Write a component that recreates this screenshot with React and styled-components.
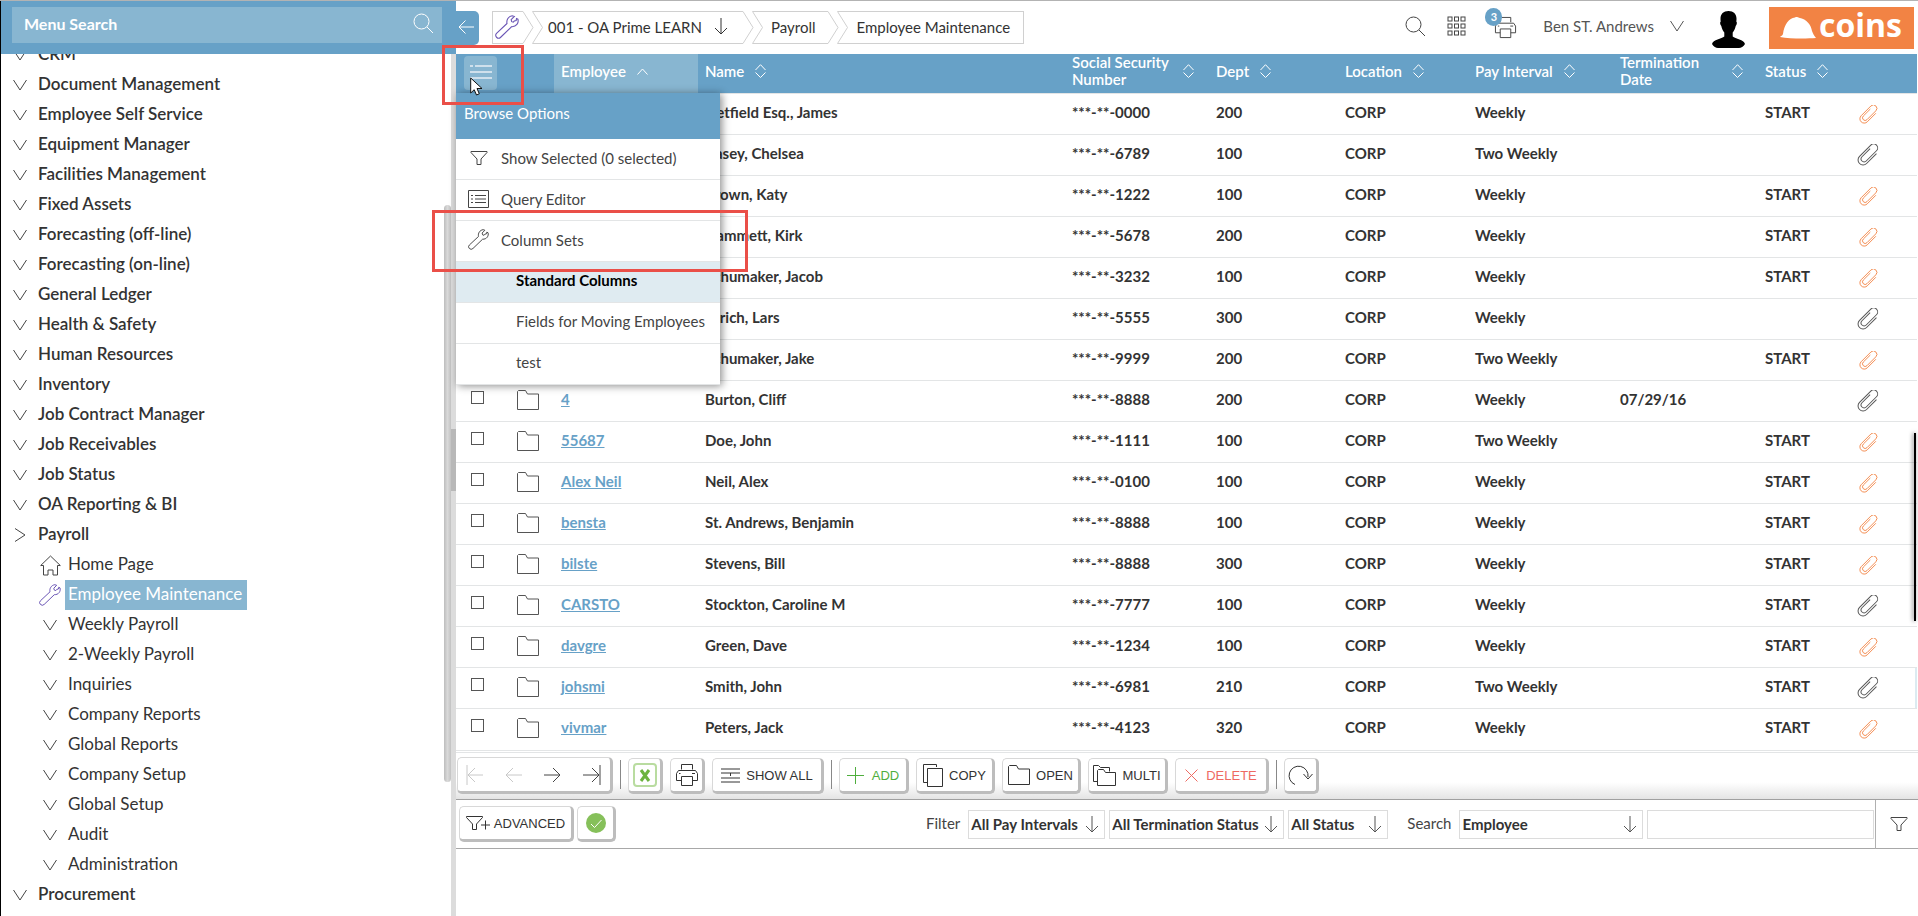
import React from 'react';
import styled, { createGlobalStyle, css } from 'styled-components';

const c = {
  blue: '#67a1c7',
  blueLight: '#88b6d1',
  ink: '#333333',
  line: '#e3e5e6',
  grey: '#d0d0d0',
  orange: '#f28344',
  purple: '#6a55b5',
};

const GlobalStyle = createGlobalStyle`
  *, *::before, *::after { box-sizing: border-box; }
  html, body { margin: 0; padding: 0; background: #fff; }
  body {
    font-family: Lato, "Open Sans", sans-serif;
    font-size: 15px;
    color: ${c.ink};
    overflow: hidden;
  }
  button, input, select { font-family: inherit; color: inherit; margin: 0; }
  ul, ol { list-style: none; margin: 0; padding: 0; }
`;

/* ---------- icons ---------- */

const Svg = styled.svg`
  display: block;
  flex: none;
  fill: none;
  stroke: currentColor;
  stroke-width: ${(p) => p.$w || 1};
`;

const Icon = ({ w, h, box, sw, children }) => (
  <Svg width={w} height={h || w} viewBox={box || `0 0 ${w} ${h || w}`} $w={sw} aria-hidden="true">
    {children}
  </Svg>
);

const Chevron = () => <Icon w={14} h={12}><path d="M.5 1 7 11 13.500 1" /></Icon>;
const ChevronRight = () => <Icon w={14} h={14}><path d="M2 .5 12 7 2 13.500" /></Icon>;
const SearchIcon = () => <Icon w={21}><circle cx="8.500" cy="8.500" r="7.500" /><path d="m14 14 6 6" /></Icon>;
const Wrench = ({ size = 22 }) => (
  <Icon w={size} box="0 0 22 22">
    <path d="M1.400 20.400a2.500 2.500 0 0 1 0-3.600l9.600-9C10.300 4.500 12.200 1.300 15.800.7l1.900.6-2.900 2.900.5 1.900 1.500.5.900-1.200 1.700-.4.300-1.700 1.300.6c1 3.400-1.500 7-5.700 6.800L5.200 20.400a2.700 2.700 0 0 1-3.800 0z" />
  </Icon>
);
const DownArrow = () => <Icon w={14} h={17}><path d="M7 0v16M1 10l6 6 6-6" /></Icon>;
const LeftArrow = () => <Icon w={16}><path d="M1 8h15M7.500 1.500 1 8l6.500 6.500" /></Icon>;
const Folder = () => <Icon w={22} h={20}><path d="M.5 19.500V1.500l1-1h7L10.500 4h11v15.500z" /></Icon>;
const Clip = ({ size = 22 }) => (
  <Icon w={size} box="0 0 22 22">
    <g transform="rotate(45 11 11)">
      <path d="M16 4v14a5 5 0 0 1-10 0V2a4 4 0 0 1 8 0V16.500a3 3 0 0 1-6 0V5" />
    </g>
  </Icon>
);
const Printer = ({ w = 24 }) => (
  <Icon w={w} h={w} box="0 0 24 24">
    <path d="M6.500 6.500v-5h11v5M6.500 17.500h-5v-7l2-3h17l2 3v7h-5" />
    <path d="M6.500 13.500h11v9h-11zM4 10.500h1.500M17 10.500h3" />
  </Icon>
);
const Grid = () => (
  <Icon w={19} h={20}>
    {[1, 8, 15].map((y) => [1, 7.5, 14].map((x) => (
      <rect key={`${x}-${y}`} x={x} y={y} width="4" height="4" />
    )))}
  </Icon>
);
const ListIcon = () => (
  <Icon w={22} h={16} sw={2}><path d="M0 2h3M5 2h17M0 8h22M0 14h22" /></Icon>
);
const Query = () => (
  <Icon w={21} h={18}>
    <path d="M.5.500h20v17H.5zM3 5.500h2M7 5.500h11M3 9h2M7 9h11M3 12.500h2M7 12.500h11" />
  </Icon>
);
const Funnel = () => <Icon w={18} h={14}><path d="M1 .5h16v1L11 8v5.500H7V8L1 1.500z" /></Icon>;
const FunnelPlus = () => (
  <Icon w={24} h={14}><path d="M.5.500h16v1L10.500 8v5.500h-4V8l-6-6.500zM15 9h9M19.500 4.500v9" /></Icon>
);
const Home = () => (
  <Icon w={21} h={21}>
    <path d="M3.500 10.500H.7L10.500 1l9.800 9.500h-2.800v9.500h-4.500v-5h-5v5H3.500z" />
  </Icon>
);
const SortBoth = () => <Icon w={11} h={14}><path d="M.5 6 5.500.7l5 5.300M.5 8.500l5 5 5-5" /></Icon>;
const SortUp = () => <Icon w={11} h={7}><path d="M.5 6.500 5.500 1l5 5.500" /></Icon>;
const Helmet = () => (
  <Svg width="36" height="22" viewBox="0 0 36 22" aria-hidden="true">
    <path fill="#fff" stroke="none" d="M0 20c1-1 2.500-1.500 3-3C4 8 9 1 15 .5c1-.6 3-.6 4 .2C27 2 31 8 32 14c1 3 2.500 5 4 7-10 .8-26 .8-36-1z" />
  </Svg>
);
const Person = () => (
  <Svg width="33" height="37" viewBox="0 0 33 37" aria-hidden="true">
    <path fill="#000" stroke="none" d="M16.500 0c5 0 8 3 8 7.500 0 1 0 2-.2 3 .9.400.8 3-.6 4.500-.6 3-1.700 5-3 6.500v4c2.500 2.500 11.300 3 12.300 7.500-1.500 2.500-4 4-6 4H6c-2 0-4.500-1.500-6-4 1-4.500 9.800-5 12.300-7.500v-4c-1.300-1.500-2.400-3.500-3-6.500-1.400-1.500-1.500-4.100-.6-4.500-.2-1-.2-2-.2-3 0-4.500 3-7.500 8-7.500z" />
  </Svg>
);
const Pointer = () => (
  <Svg width="13" height="20" viewBox="0 0 13 20" aria-hidden="true">
    <path fill="#fff" stroke="#111" d="M.7 1v15l3.500-3.300L6.500 18l2.800-1.200L7 11.500h5z" />
  </Svg>
);

/* ---------- shell ---------- */

const Shell = styled.div`
  display: grid;
  grid-template-columns: 456px minmax(0, 1fr);
  height: 100vh;
  border-top: 1px solid #b3b3b3;
  overflow: hidden;
`;

const Sidebar = styled.aside`
  display: flex;
  flex-direction: column;
  min-height: 0;
  border-left: 1px solid #000;
`;

const SearchBar = styled.div`
  flex: none;
  height: 53px;
  padding: 6px 14px 0 11px;
  background: ${c.blue};
`;

const SearchField = styled.label`
  display: flex;
  align-items: center;
  height: 36px;
  padding: 0 8px 3px 12px;
  background: ${c.blueLight};
  color: #fff;
`;

const SearchInput = styled.input`
  flex: 1;
  min-width: 0;
  border: 0;
  padding: 0;
  outline: 0;
  background: transparent;
  font-size: 16px;
  font-weight: 700;
  &::placeholder { color: #fff; opacity: 1; }
`;

const SidebarBody = styled.div`
  display: flex;
  flex: 1;
  min-height: 0;
`;

const MenuClip = styled.nav`
  flex: 1;
  overflow: hidden;
`;

const Menu = styled.ul`
  margin-top: -14px;
`;

const MenuItem = styled.li`
  display: flex;
  align-items: center;
  height: 30px;
  padding-left: ${(p) => (p.$sub ? 37 : 12)}px;
`;

const MenuIcon = styled.span`
  display: flex;
  justify-content: center;
  width: ${(p) => (p.$sub ? 24 : 14)}px;
  color: ${(p) => (p.$purple ? c.purple : '#444')};
`;

const MenuLink = styled.a`
  display: block;
  height: 30px;
  margin-left: ${(p) => (p.$sub ? 3 : 8)}px;
  padding: 0 5px 0 3px;
  line-height: 28px;
  font-size: 17px;
  font-weight: ${(p) => (p.$sub ? 400 : 600)};
  color: ${c.ink};
  text-decoration: none;
  white-space: nowrap;
  ${(p) => p.$active && css`
    background: ${c.blueLight};
    color: #fff;
  `}
`;

const ScrollTrack = styled.div`
  width: 7px;
  padding-top: 151px;
`;

const ScrollThumb = styled.div`
  height: 577px;
  border-radius: 4px;
  background: linear-gradient(90deg, #bdbdbd, #d9d9d9 50%, #c2c2c2);
`;

const Splitter = styled.div`
  width: 5px;
  padding-top: 375px;
  background: #dcdcdc;
`;

const SplitterGrip = styled.div`
  height: 62px;
  background: #b8b8b8;
`;

/* ---------- top bar ---------- */

const Main = styled.main`
  display: flex;
  flex-direction: column;
  min-width: 0;
  position: relative;
`;

const TopBar = styled.header`
  display: flex;
  align-items: flex-start;
  height: 53px;
  padding: 10px 4px 0 0;
`;

const CollapseButton = styled.button`
  display: grid;
  place-items: center;
  width: 23px;
  height: 34px;
  margin-right: 13px;
  padding: 0 4px 2px 0;
  border: 0;
  border-radius: 0 5px 5px 0;
  background: ${c.blue};
  color: #fff;
`;

const Crumbs = styled.ol`
  display: flex;
  height: 33px;
  border-left: 1px solid ${c.grey};
  border-right: 1px solid ${c.grey};
`;

const Crumb = styled.li`
  display: flex;
  align-items: center;
  gap: 12px;
  border-top: 1px solid ${c.grey};
  border-bottom: 1px solid ${c.grey};
  padding: 0 ${(p) => p.$right}px 2px ${(p) => p.$left}px;
  font-size: 15px;
  white-space: nowrap;
  a { color: ${c.ink}; text-decoration: none; }
`;

const CrumbGap = styled.li`
  color: ${c.grey};
`;

const CrumbJoin = () => (
  <CrumbGap aria-hidden="true">
    <Icon w={20} h={33}><path d="M0 .5 10 16.500 0 32.500M20 .5H9.500l10 16-10 16H20" /></Icon>
  </CrumbGap>
);

const Tools = styled.div`
  display: flex;
  align-items: flex-start;
  margin-left: auto;
`;

const ToolButton = styled.button`
  position: relative;
  display: flex;
  padding: 5px 0 0;
  margin-right: ${(p) => p.$gap}px;
  border: 0;
  background: none;
  color: #444;
`;

const Badge = styled.span`
  position: absolute;
  top: -3px;
  left: -9px;
  width: 17px;
  height: 18px;
  border-radius: 9px;
  background: ${c.blue};
  color: #fff;
  font-size: 11px;
  font-weight: 700;
  line-height: 17px;
  text-align: center;
`;

const UserButton = styled.button`
  display: flex;
  align-items: center;
  gap: 16px;
  height: 31px;
  margin-right: 28px;
  padding: 0 0 1px;
  border: 0;
  background: none;
  font-size: 15px;
  color: #555;
`;

const Avatar = styled.span`
  margin-right: 24px;
`;

const Logo = styled.a`
  display: flex;
  align-items: center;
  gap: 3px;
  width: 145px;
  height: 42px;
  margin-top: -4px;
  padding-left: 11px;
  background: ${c.orange};
  color: #fff;
  font: 700 32px/36px "Open Sans", sans-serif;
  text-decoration: none;
`;

const LogoText = styled.span`
  padding-bottom: 6px;
`;

/* ---------- data table ---------- */

const Table = styled.table`
  width: 100%;
  table-layout: fixed;
  border-collapse: separate;
  border-spacing: 0;
  padding-right: 1px;
`;

const Th = styled.th`
  height: 40px;
  padding: 0 ${(p) => (p.$wrap ? 15 : 7)}px ${(p) => (p.$menu ? 1 : 5)}px ${(p) => (p.$menu ? 8 : 7)}px;
  border-bottom: 1px solid ${c.line};
  background: ${(p) => (p.$sorted ? c.blueLight : c.blue)};
  background-clip: padding-box;
  color: #fff;
  font-size: 15px;
  font-weight: 600;
  line-height: 17px;
  text-align: left;
  vertical-align: middle;
`;

const SortButton = styled.button`
  display: flex;
  align-items: center;
  gap: 11px;
  width: ${(p) => (p.$wrap ? '100%' : 'auto')};
  padding: 0;
  border: 0;
  background: none;
  font: inherit;
  color: #fff;
  text-align: left;
  span { flex: ${(p) => (p.$wrap ? 1 : 'none')}; }
`;

const OptionsButton = styled.button`
  display: flex;
  justify-content: center;
  width: 33px;
  height: 34px;
  padding: 8px 0 0;
  border: 0;
  border-radius: 4px;
  background: ${c.blueLight};
  color: #cfe0ec;
`;

const Td = styled.td`
  height: 41px;
  padding: 0 7px 4px;
  border-bottom: 1px solid ${c.line};
  font-size: 15px;
  font-weight: 700;
  white-space: nowrap;
  vertical-align: middle;
  tr:last-child > & { border-bottom-color: #fff; }
`;

const CheckCell = styled(Td)`
  padding: 10px 0 0 15px;
  vertical-align: top;
`;

const IconCell = styled(Td)`
  padding-bottom: 2px;
  color: #555;
`;

const ClipCell = styled(Td)`
  padding: 0;
  color: ${(p) => (p.$filled ? c.orange : '#555')};
  ${(p) => p.$focus && css`box-shadow: inset -2px 0 #dcebf1;`}
`;

const ClipBox = styled.span`
  display: flex;
  justify-content: center;
  width: 36px;
`;

const Check = styled.input`
  display: block;
  appearance: none;
  width: 13px;
  height: 13px;
  border: 1px solid #555;
  background: #fff;
`;

const RowLink = styled.a`
  color: ${c.blue};
`;

const ScrollHint = styled.div`
  position: absolute;
  right: 2px;
  top: 432px;
  width: 2px;
  height: 188px;
  background: #000;
  box-shadow: -1px 0 4px rgba(0, 0, 0, 0.6);
`;

/* ---------- bottom bars ---------- */

const ActionBar = styled.div`
  display: flex;
  align-items: flex-start;
  gap: 7px;
  height: 50px;
  padding: 4px 1px 0;
  border-top: 1px solid ${c.line};
  border-bottom: 1px solid #a0a0a0;
  background: linear-gradient(#fff 65%, #e4e4e4);
  box-shadow: inset 0 1px #fff, inset 0 2px ${c.line};
`;

const Button = styled.button`
  display: flex;
  align-items: center;
  justify-content: center;
  gap: ${(p) => p.$gap || 6}px;
  height: 36px;
  min-width: ${(p) => p.$min || 35}px;
  margin: ${(p) => p.$drop || 0}px ${(p) => p.$after || 0}px 0 0;
  padding: 0 2px;
  border: 1px solid #d8d8d8;
  border-right: 3px solid #bdbdbd;
  border-bottom: 3px solid #bdbdbd;
  border-radius: 5px;
  background: #fff;
  color: ${(p) => p.$color || '#333'};
  font-family: "Liberation Sans", Arial, sans-serif;
  font-size: 13px;
  white-space: nowrap;
`;

const PagerGroup = styled.div`
  display: flex;
  align-items: center;
  justify-content: space-between;
  width: 156px;
  height: 37px;
  margin-top: 2px;
  padding: 0 9px 0 8px;
  border: 1px solid #d8d8d8;
  border-right: 3px solid #bdbdbd;
  border-bottom: 3px solid #bdbdbd;
  border-radius: 5px;
  background: #fff;
`;

const PagerButton = styled.button`
  display: flex;
  padding: 0;
  border: 0;
  background: none;
  color: ${(p) => (p.disabled ? '#c8c8c8' : '#444')};
`;

const Rule = styled.span`
  width: 1px;
  height: 29px;
  margin: 5px 0 0;
  background: #888;
`;

const FilterBar = styled.form`
  display: flex;
  align-items: center;
  height: 49px;
  border-bottom: 1px solid #a8a8a8;
  padding-left: 3px;
`;

const FilterLabel = styled.label`
  margin: 0 8px 3px ${(p) => p.$left}px;
  font-size: 15px;
  color: #444;
`;

const SelectBox = styled.span`
  display: grid;
  align-items: center;
  width: ${(p) => p.$width}px;
  height: 29px;
  margin-right: 4px;
  border: 1px solid #dcdcdc;
  color: #555;
  > * { grid-area: 1 / 1; }
  > svg { justify-self: end; margin-right: 5px; pointer-events: none; }
`;

const Select = styled.select`
  appearance: none;
  width: 100%;
  height: 27px;
  padding: 0 2px;
  border: 0;
  background: #fff;
  color: ${c.ink};
  font-size: 15px;
  font-weight: 700;
`;

const SearchText = styled.input`
  flex: 1;
  min-width: 0;
  height: 29px;
  border: 1px solid #dcdcdc;
`;

const FunnelButton = styled.button`
  display: grid;
  place-items: center;
  width: 43px;
  height: 49px;
  margin-left: 1px;
  padding: 0 0 0 3px;
  border: 0;
  border-left: 1px solid #b0b0b0;
  background: none;
  color: #444;
`;

/* ---------- overlays ---------- */

const Popup = styled.div`
  position: absolute;
  top: 92px;
  left: 0;
  width: 264px;
  background: #fff;
  box-shadow: 2px 1px 8px rgba(0, 0, 0, 0.45);
  font-size: 15px;
`;

const PopupTitle = styled.div`
  height: 46px;
  padding-left: 8px;
  background: ${c.blue};
  color: #fff;
  line-height: 40px;
`;

const PopupItem = styled.button`
  display: flex;
  align-items: center;
  gap: 12px;
  width: 100%;
  height: 41px;
  padding: 0 0 ${(p) => (p.$sub ? 5 : 3)}px ${(p) => (p.$sub ? 60 : 12)}px;
  border: 0;
  border-bottom: 1px solid ${c.line};
  background: ${(p) => (p.$active ? '#dfebf1' : '#fff')};
  color: ${(p) => (p.$active ? '#000' : '#444')};
  font-size: 15px;
  font-weight: ${(p) => (p.$active ? 700 : 400)};
  white-space: nowrap;
`;

const PopupIcon = styled.span`
  display: flex;
  justify-content: center;
  width: 21px;
`;

const Highlight = styled.div`
  position: absolute;
  left: ${(p) => p.$x}px;
  top: ${(p) => p.$y}px;
  width: ${(p) => p.$w}px;
  height: ${(p) => p.$h}px;
  border: 3px solid #ea4f48;
  pointer-events: none;
`;

const Cursor = styled.span`
  position: absolute;
  left: 14px;
  top: 76px;
`;

/* ---------- data ---------- */

const menu = [
  ['CRM'], ['Document Management'], ['Employee Self Service'], ['Equipment Manager'],
  ['Facilities Management'], ['Fixed Assets'], ['Forecasting (off-line)'], ['Forecasting (on-line)'],
  ['General Ledger'], ['Health & Safety'], ['Human Resources'], ['Inventory'],
  ['Job Contract Manager'], ['Job Receivables'], ['Job Status'], ['OA Reporting & BI'],
  ['Payroll', 'open'], ['Home Page', 'home'], ['Employee Maintenance', 'active'],
  ['Weekly Payroll', 'sub'], ['2-Weekly Payroll', 'sub'], ['Inquiries', 'sub'],
  ['Company Reports', 'sub'], ['Global Reports', 'sub'], ['Company Setup', 'sub'],
  ['Global Setup', 'sub'], ['Audit', 'sub'], ['Administration', 'sub'], ['Procurement'],
];

const menuIcons = { open: ChevronRight, home: Home, active: Wrench };

const columns = [
  ['Name'], ['Social Security Number', true], ['Dept'], ['Location'],
  ['Pay Interval'], ['Termination Date', true], ['Status'],
];

const W = 'Weekly';
const T = 'Two Weekly';
const rows = [
  ['1', 'Hetfield Esq., James', '0000', '200', W, '', 'START', 1],
  ['1001', 'Casey, Chelsea', '6789', '100', T, '', '', 0],
  ['1002', 'Brown, Katy', '1222', '100', W, '', 'START', 1],
  ['2', 'Hammett, Kirk', '5678', '200', W, '', 'START', 1],
  ['22', 'Schumaker, Jacob', '3232', '100', W, '', 'START', 1],
  ['3', 'Ulrich, Lars', '5555', '300', W, '', '', 0],
  ['33', 'Schumaker, Jake', '9999', '200', T, '', 'START', 1],
  ['4', 'Burton, Cliff', '8888', '200', W, '07/29/16', '', 0],
  ['55687', 'Doe, John', '1111', '100', T, '', 'START', 1],
  ['Alex Neil', 'Neil, Alex', '0100', '100', W, '', 'START', 1],
  ['bensta', 'St. Andrews, Benjamin', '8888', '100', W, '', 'START', 1],
  ['bilste', 'Stevens, Bill', '8888', '300', W, '', 'START', 1],
  ['CARSTO', 'Stockton, Caroline M', '7777', '100', W, '', 'START', 0],
  ['davgre', 'Green, Dave', '1234', '100', W, '', 'START', 1],
  ['johsmi', 'Smith, John', '6981', '210', T, '', 'START', 0],
  ['vivmar', 'Peters, Jack', '4123', '320', W, '', 'START', 1],
];

const FilterSelect = ({ id, label, width, value }) => (
  <SelectBox $width={width}>
    <Select id={id} aria-label={label} defaultValue={value}>
      <option>{value}</option>
    </Select>
    <DownArrow />
  </SelectBox>
);

export default function App() {
  return (
    <>
      <GlobalStyle />
      <Shell>
        <Sidebar>
          <SearchBar>
            <SearchField>
              <SearchInput placeholder="Menu Search" aria-label="Menu Search" />
              <SearchIcon />
            </SearchField>
          </SearchBar>
          <SidebarBody>
            <MenuClip aria-label="Modules">
              <Menu>
                {menu.map(([label, kind]) => {
                  const sub = !!kind && kind !== 'open';
                  const Glyph = menuIcons[kind] || Chevron;
                  return (
                    <MenuItem key={label} $sub={sub}>
                      <MenuIcon $sub={sub} $purple={kind === 'active'}><Glyph /></MenuIcon>
                      <MenuLink href="#" $sub={sub} $active={kind === 'active'}>{label}</MenuLink>
                    </MenuItem>
                  );
                })}
              </Menu>
            </MenuClip>
            <ScrollTrack><ScrollThumb /></ScrollTrack>
            <Splitter><SplitterGrip /></Splitter>
          </SidebarBody>
        </Sidebar>

        <Main>
          <TopBar>
            <CollapseButton aria-label="Collapse menu"><LeftArrow /></CollapseButton>
            <Crumbs>
              <Crumb $left={2} $right={4}>
                <MenuIcon $sub $purple><Wrench size={24} /></MenuIcon>
              </Crumb>
              <CrumbJoin />
              <Crumb $left={5} $right={15}><a href="#">001 - OA Prime LEARN</a><DownArrow /></Crumb>
              <CrumbJoin />
              <Crumb $left={8} $right={13}><a href="#">Payroll</a></Crumb>
              <CrumbJoin />
              <Crumb $left={8} $right={13}><a href="#">Employee Maintenance</a></Crumb>
            </Crumbs>
            <Tools>
              <ToolButton $gap={21} aria-label="Search"><SearchIcon /></ToolButton>
              <ToolButton $gap={28} aria-label="Applications"><Grid /></ToolButton>
              <ToolButton $gap={26} aria-label="Print queue">
                <Printer w={23} />
                <Badge>3</Badge>
              </ToolButton>
              <UserButton>Ben ST. Andrews<Chevron /></UserButton>
              <Avatar><Person /></Avatar>
              <Logo href="#"><Helmet /><LogoText>coins</LogoText></Logo>
            </Tools>
          </TopBar>

          <Table>
            <colgroup>
              <col width="54" /><col width="44" /><col width="144" /><col />
              <col width="144" /><col width="129" /><col width="130" /><col width="145" />
              <col width="145" /><col width="92" /><col width="67" />
            </colgroup>
            <thead>
              <tr>
                <Th $menu colSpan={2}>
                  <OptionsButton aria-label="Browse Options"><ListIcon /></OptionsButton>
                </Th>
                <Th $sorted><SortButton><span>Employee</span><SortUp /></SortButton></Th>
                {columns.map(([label, wrap]) => (
                  <Th key={label} $wrap={wrap}>
                    <SortButton $wrap={wrap}><span>{label}</span><SortBoth /></SortButton>
                  </Th>
                ))}
                <Th />
              </tr>
            </thead>
            <tbody>
              {rows.map(([id, name, ssn, dept, pay, term, status, clip]) => (
                <tr key={id}>
                  <CheckCell><Check type="checkbox" aria-label={`Select ${name}`} /></CheckCell>
                  <IconCell><Folder /></IconCell>
                  <Td><RowLink href="#">{id}</RowLink></Td>
                  <Td>{name}</Td>
                  <Td>{`***-**-${ssn}`}</Td>
                  <Td>{dept}</Td>
                  <Td>CORP</Td>
                  <Td>{pay}</Td>
                  <Td>{term}</Td>
                  <Td>{status}</Td>
                  <ClipCell $filled={!!clip} $focus={id === 'johsmi'}>
                    <ClipBox><Clip size={clip ? 19 : 22} /></ClipBox>
                  </ClipCell>
                </tr>
              ))}
            </tbody>
          </Table>

          <ActionBar>
            <PagerGroup>
              <PagerButton disabled aria-label="First">
                <Icon w={17} h={20}><path d="M1 0v20M2 10h15M9 3l-7 7 7 7" /></Icon>
              </PagerButton>
              <PagerButton disabled aria-label="Previous">
                <Icon w={17} h={20}><path d="M1 10h16M8 3l-7 7 7 7" /></Icon>
              </PagerButton>
              <PagerButton aria-label="Next">
                <Icon w={17} h={20}><path d="M0 10h16M9 3l7 7-7 7" /></Icon>
              </PagerButton>
              <PagerButton aria-label="Last">
                <Icon w={18} h={20}><path d="M17 0v20M0 10h16M9 3l7 7-7 7" /></Icon>
              </PagerButton>
            </PagerGroup>
            <Rule />
            <Button $drop={3} aria-label="Export to Excel">
              <Icon w={24}>
                <rect x="1" y="1" width="22" height="22" rx="3" stroke="#b9dca0" strokeWidth="2" />
                <path d="m8 7 8 11M16 7 8 18" stroke="#6cb33f" strokeWidth="3" />
              </Icon>
            </Button>
            <Button $drop={3} aria-label="Print"><Printer /></Button>
            <Button $drop={3} $min={112}>
              <Icon w={19} h={15}><path d="M0 1h19M0 5h19M0 10h19M0 14h19M9.500 5v3" /></Icon>SHOW ALL
            </Button>
            <Rule />
            <Button $drop={3} $min={70} $color="#4fae3d" $gap={8}>
              <Icon w={17}><path d="M8.500 0v17M0 8.500h17" /></Icon>ADD
            </Button>
            <Button $drop={3} $min={79}>
              <Icon w={20} h={23}><path d="M4 18.500H.5v-18h13V3M4.500 4.500h15v18h-15z" /></Icon>COPY
            </Button>
            <Button $drop={3} $min={79}><Folder />OPEN</Button>
            <Button $drop={3} $min={80}>
              <Icon w={23} h={21}>
                <path d="M4 16.500H.5V.5h5l2 2h9v4M4.500 20.500V5.500l1-1h5l2 3h10v13z" />
              </Icon>MULTI
            </Button>
            <Button $drop={3} $min={94} $color="#ee6a62" $gap={8}>
              <Icon w={13}><path d="m.5.500 12 12M12.500.500l-12 12" /></Icon>DELETE
            </Button>
            <Rule />
            <Button $drop={3} aria-label="Refresh">
              <Icon w={25} h={21}><path d="M7 19.500A9.500 9.500 0 1 1 20 12M15.500 9l4.500 5 4.500-5" /></Icon>
            </Button>
          </ActionBar>

          <FilterBar onSubmit={(e) => e.preventDefault()}>
            <Button type="button" $min={115} $after={3} $gap={4}><FunnelPlus />ADVANCED</Button>
            <Button type="submit" $min={39} aria-label="Apply">
              <Icon w={20}>
                <circle cx="10" cy="10" r="10" fill="#86c05a" stroke="none" />
                <path d="m5 11 3.500 3.500L15.500 7" stroke="#fff" />
              </Icon>
            </Button>
            <FilterLabel htmlFor="pay" $left={310}>Filter</FilterLabel>
            <FilterSelect id="pay" label="Pay intervals" width={137} value="All Pay Intervals" />
            <FilterSelect id="term" label="Termination status" width={175} value="All Termination Status" />
            <FilterSelect id="status" label="Status" width={100} value="All Status" />
            <FilterLabel htmlFor="field" $left={15}>Search</FilterLabel>
            <FilterSelect id="field" label="Search field" width={184} value="Employee" />
            <SearchText aria-label="Search text" />
            <FunnelButton type="button" aria-label="Filters"><Funnel /></FunnelButton>
          </FilterBar>

          <ScrollHint />

          <Popup role="menu">
            <PopupTitle>Browse Options</PopupTitle>
            <PopupItem><PopupIcon><Funnel /></PopupIcon>Show Selected (0 selected)</PopupItem>
            <PopupItem><PopupIcon><Query /></PopupIcon>Query Editor</PopupItem>
            <PopupItem><PopupIcon><Wrench size={21} /></PopupIcon>Column Sets</PopupItem>
            <PopupItem $sub $active>Standard Columns</PopupItem>
            <PopupItem $sub>Fields for Moving Employees</PopupItem>
            <PopupItem $sub>test</PopupItem>
          </Popup>
          <Highlight $x={-14} $y={44} $w={82} $h={60} />
          <Highlight $x={-24} $y={209} $w={316} $h={62} />
          <Cursor><Pointer /></Cursor>
        </Main>
      </Shell>
    </>
  );
}
